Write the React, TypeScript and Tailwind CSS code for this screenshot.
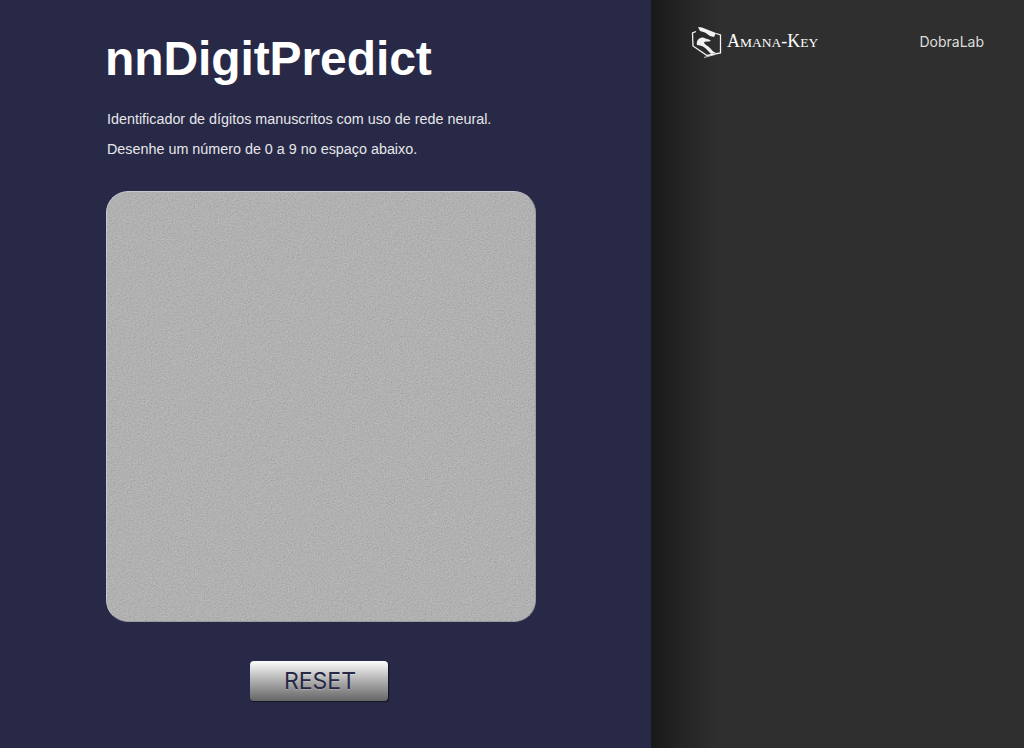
import { useId } from 'react';

function Logo() {
  return (
    <svg width="32" height="32" viewBox="0 0 32 32" fill="none" className="shrink-0">
      <path d="M5 5.5 L1.5 7 L2 20 L16 29.5 L29.5 27 L29.5 9 L25 7.5" stroke="#f2f2f2" strokeWidth="1.3" />
      <path d="M7 1 L11 1.5 L25 7 L23 11 L19 10 L14 6.5 L9 5 Z" fill="#f2f2f2" />
      <path d="M6 19 C5 15 8 11 12 11.5 C14 12 15 13 18 13.5 L20 15 C17 16 14 15 13 16.5 C13.5 18.5 17 20 19 22 C21 24 22 26 25 27 L20 28 C17 25 15 22 12 20.5 C10 19.5 8 19 6 19 Z" fill="#f2f2f2" />
      <path d="M13 31.5 L24 28.5" stroke="#f2f2f2" strokeWidth="0.8" />
    </svg>
  );
}

function NoisePad() {
  const id = useId().replace(/:/g, '');
  return (
    <div className="relative w-[430px] h-[431px] rounded-[22px] border border-t-[#c6c6ce] border-l-[#c6c6ce] border-r-[#9a9aa2] border-b-[#9a9aa2] bg-[#acacac] overflow-hidden">
      <svg className="absolute inset-0 w-full h-full" aria-hidden="true">
        <filter id={id}>
          <feTurbulence type="fractalNoise" baseFrequency="0.7" numOctaves="2" stitchTiles="stitch" />
          <feColorMatrix type="saturate" values="0" />
          <feComponentTransfer>
            <feFuncA type="linear" slope="0" intercept="0.32" />
          </feComponentTransfer>
        </filter>
        <rect width="100%" height="100%" filter={`url(#${id})`} />
      </svg>
    </div>
  );
}

export default function App() {
  return (
    <div className="flex w-full h-[748px] overflow-hidden font-['Liberation_Sans',Arial,sans-serif]">
      <main className="w-[651px] shrink-0 bg-[#282947] pl-[106px]">
        <h1 className="pt-[30px] -ml-[1px] text-[48px] leading-[58px] font-bold tracking-[-0.1px] text-white">nnDigitPredict</h1>
        <p className="mt-[16px] ml-[1px] text-[14.35px] leading-[30px] text-[#e6e6ea]">
          Identificador de dígitos manuscritos com uso de rede neural.
        </p>
        <p className="ml-[1px] text-[14.35px] leading-[30px] text-[#e6e6ea]">
          Desenhe um número de 0 a 9 no espaço abaixo.
        </p>
        <div className="mt-[27px]">
          <NoisePad />
        </div>
        <div className="mt-[39px] ml-[144px]">
          <button className="w-[138px] h-[40px] rounded-[4px] bg-gradient-to-b from-[#fdfdfd] to-[#666666] shadow-[1px_1px_1px_#14141f] pl-[2px] font-['Inter',sans-serif] text-[23px] leading-[40px] text-[#282947] [text-shadow:0_1px_1px_rgba(255,255,255,0.25)]">
            RESET
          </button>
        </div>
      </main>
      <aside className="flex-1 bg-[#2f2f2f] bg-[linear-gradient(to_right,#191919_0px,#232323_28px,#2f2f2f_68px)]">
        <header className="flex items-start justify-between pt-[25px] pl-[40px] pr-[40px]">
          <div className="flex items-center gap-[4px]">
            <Logo />
            <span className="font-['Liberation_Serif',serif] text-[18px] leading-[32px] text-white">
              A<span className="text-[13.5px]">MANA</span>-K<span className="text-[13.5px]">EY</span>
            </span>
          </div>
          <span className="mt-[7px] font-['Inter',sans-serif] text-[14px] leading-[20px] text-[#dedede]">DobraLab</span>
        </header>
      </aside>
    </div>
  );
}
